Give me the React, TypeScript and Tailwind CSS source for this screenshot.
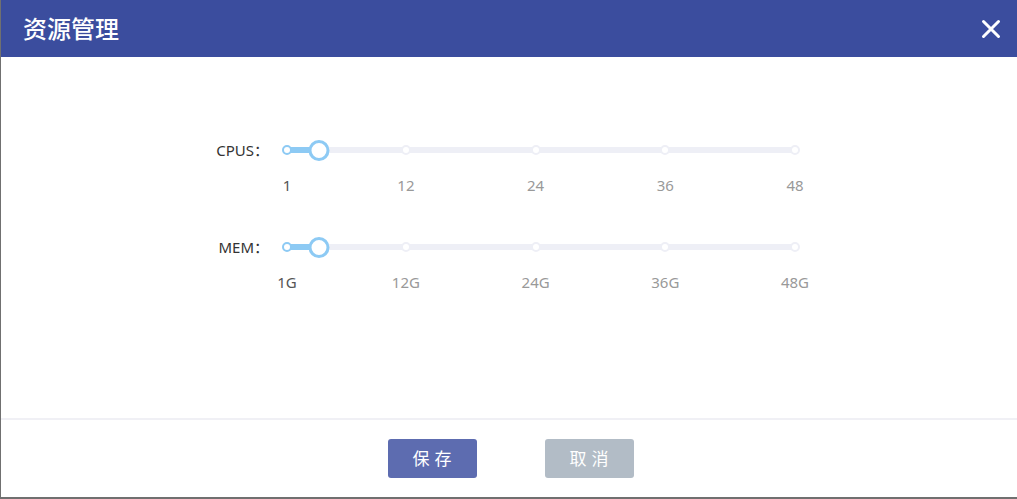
import React from "react";

const font = { fontFamily: '"Noto Sans", "Noto Sans CJK SC", sans-serif' };

type SliderProps = { label: string; ticks: string[]; min: number; max: number; value: number; tickValues: number[] };

function Slider({ label, ticks, min, max, value, tickValues }: SliderProps) {
  const pct = (v: number) => ((v - min) / (max - min)) * 100;
  return (
    <div className="flex items-start">
      <div className="w-[270px] h-[20px] flex items-center justify-end pr-[2px] text-[15px] text-[#333]">{label}</div>
      <div className="ml-[16px] w-[508px] relative h-[60px]">
        <div className="absolute left-0 right-0 top-[7px] h-[6px] rounded-full bg-[#eeeff6]" />
        <div className="absolute left-0 top-[7px] h-[6px] bg-[#8dcaf4]" style={{ width: `${pct(value)}%` }} />
        {tickValues.map((t, i) => (
          <div
            key={i}
            className={
              "absolute top-[5px] w-[10px] h-[10px] -translate-x-1/2 rounded-full bg-white border-2 " +
              (t <= value ? "border-[#8dcaf4]" : "border-[#eeeff6]")
            }
            style={{ left: `${pct(t)}%` }}
          />
        ))}
        <div
          className="absolute top-0 w-[21px] h-[21px] -translate-x-1/2 rounded-full bg-white border-[3px] border-[#8dcaf4]"
          style={{ left: `${pct(value)}%` }}
        />
        {ticks.map((t, i) => (
          <div
            key={t}
            className={"absolute top-[35px] -translate-x-1/2 text-[15px] leading-[20px] " + (i === 0 ? "text-[#555]" : "text-[#999]")}
            style={{ left: `${pct(tickValues[i])}%` }}
          >
            {t}
          </div>
        ))}
      </div>
    </div>
  );
}

export default function App() {
  const tv = [1, 12, 24, 36, 48];
  return (
    <div className="w-[1017px] h-[499px] bg-white border-l border-b-2 border-[#707070] flex flex-col" style={font}>
      <div className="h-[57px] bg-[#3b4d9e] flex items-center justify-between pl-[22px] pr-[16px] shrink-0">
        <div className="text-white text-[24px] font-medium leading-none">资源管理</div>
        <svg width="20" height="20" viewBox="0 0 20 20">
          <path d="M2.5 2.5 L17.5 17.5 M17.5 2.5 L2.5 17.5" stroke="white" strokeWidth="3" strokeLinecap="round" />
        </svg>
      </div>
      <div className="h-[361px] pt-[83px] flex flex-col gap-[37px] shrink-0">
        <Slider label="CPUS：" ticks={["1", "12", "24", "36", "48"]} min={1} max={48} value={4} tickValues={tv} />
        <Slider label="MEM：" ticks={["1G", "12G", "24G", "36G", "48G"]} min={1} max={48} value={4} tickValues={tv} />
      </div>
      <div className="h-[2px] bg-[#f0f0f5] shrink-0" />
      <div className="flex justify-center gap-[68px] pt-[19px] pl-[3px]">
        <button className="w-[89px] h-[39px] rounded-[3px] bg-[#5d6cb0] text-white text-[17px] tracking-[5px] pl-[5px]">保存</button>
        <button className="w-[89px] h-[39px] rounded-[3px] bg-[#b2bcc6] text-white text-[17px] tracking-[5px] pl-[5px]">取消</button>
      </div>
    </div>
  );
}
